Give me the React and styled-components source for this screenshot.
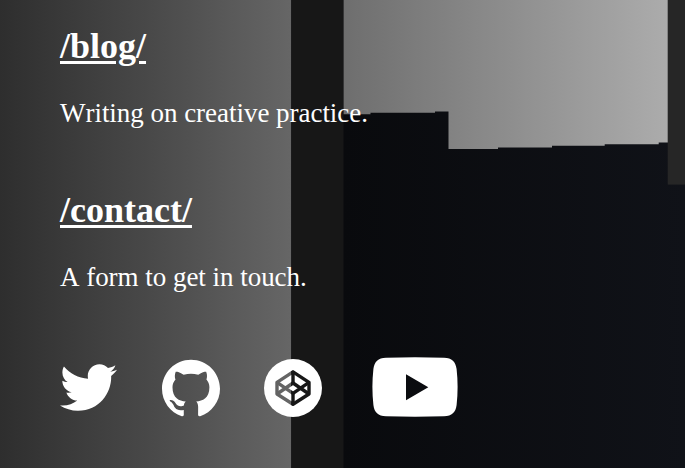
import React from 'react';
import styled, { createGlobalStyle } from 'styled-components';
import { FaTwitter } from 'react-icons/fa';
import { SiGithub } from 'react-icons/si';

const GlobalStyle = createGlobalStyle`
  body {
    margin: 0;
    background: #0b0c10;
    overflow: hidden;
  }
`;

const Page = styled.main`
  position: relative;
  box-sizing: border-box;
  width: 685px;
  height: 468px;
  overflow: hidden;
  color: #fff;
  font-family: 'Liberation Serif', 'Times New Roman', serif;
  font-kerning: none;
`;

const Scenery = styled.svg`
  position: absolute;
  inset: 0;
  display: block;
`;

const Content = styled.div`
  position: relative;
  display: flex;
  flex-direction: column;
  padding: 26px 0 0 60px;
`;

const Section = styled.section`
  height: 164px;
`;

const Title = styled.h2`
  margin: 0 0 31px;
  font-size: 36px;
  line-height: 41px;
  font-weight: 700;
`;

const TitleLink = styled.a`
  color: inherit;
  text-decoration: underline;
  text-decoration-thickness: 3px;
  text-underline-offset: 3px;
`;

const Summary = styled.p`
  margin: 0;
  font-size: 27px;
  line-height: 31px;
  letter-spacing: -0.03px;
`;

const Social = styled.nav`
  display: flex;
  align-items: center;
  height: 60px;
  margin-top: 3px;
`;

const SocialLink = styled.a`
  display: flex;
  flex: none;
  margin-left: ${(p) => p.$gap || 0}px;
  margin-top: ${(p) => p.$drop || 0}px;
  color: #fff;
`;

function Backdrop() {
  return (
    <Scenery width="685" height="468" viewBox="0 0 685 468" aria-hidden="true">
      <defs>
        <linearGradient id="wall" x1="0" x2="1">
          <stop offset="0" stopColor="#2e2e2e" />
          <stop offset="0.5" stopColor="#484848" />
          <stop offset="1" stopColor="#666666" />
        </linearGradient>
        <linearGradient id="sky" x1="0" x2="1">
          <stop offset="0" stopColor="#6e6e6e" />
          <stop offset="1" stopColor="#acacac" />
        </linearGradient>
        <linearGradient id="block" x1="0" x2="1">
          <stop offset="0" stopColor="#090a0d" />
          <stop offset="1" stopColor="#101218" />
        </linearGradient>
      </defs>
      <rect width="291.3" height="468" fill="url(#wall)" />
      <rect x="291.3" width="52.5" height="468" fill="#171717" />
      <rect x="343.6" width="341.4" height="468" fill="url(#block)" />
      <path
        d="M343.6 0H668V142.6H658.7V144.3H604.7V145.8H552V147.4H498V148.9H448.5V111.4H435V112.7H370.5V114.3H343.6Z"
        fill="url(#sky)"
      />
      <rect x="667.7" width="17.3" height="184.6" fill="#262626" />
    </Scenery>
  );
}

function CodepenIcon() {
  return (
    <svg width="58" height="58" viewBox="0 0 58 58">
      <mask id="codepen-cut">
        <rect width="58" height="58" fill="#fff" />
        <g fill="none" stroke="#000" strokeWidth="3.4" strokeLinejoin="round">
          <path d="M29 12.8 45 23.4v11.6L29 45.2 13 35V23.4Z" />
          <path d="M29 12.8V24M29 34.4V45.2" />
          <path d="M13 23.4 29 34.4 45 23.4M13 35 29 24 45 35" />
        </g>
      </mask>
      <circle cx="29" cy="29" r="29" fill="currentColor" mask="url(#codepen-cut)" />
    </svg>
  );
}

function YoutubeIcon() {
  return (
    <svg width="86" height="60" viewBox="0 0 86 60">
      <path
        fill="currentColor"
        fillRule="evenodd"
        d="M14 .7Q43-.2 72 .7C80 1 83.6 4.5 84.6 12Q86.6 30 84.6 48C83.6 55.5 80 59 72 59.3Q43 60.2 14 59.3C6 59 2.4 55.5 1.4 48Q-.6 30 1.4 12C2.4 4.5 6 1 14 .7ZM34 17.3V43.2L56.3 30.3Z"
      />
    </svg>
  );
}

const sections = [
  { title: '/blog/', summary: 'Writing on creative practice.' },
  { title: '/contact/', summary: 'A form to get in touch.' },
];

export default function App() {
  return (
    <>
      <GlobalStyle />
      <Page>
        <Backdrop />
        <Content>
          {sections.map(({ title, summary }) => (
            <Section key={title}>
              <Title>
                <TitleLink href="#">{title}</TitleLink>
              </Title>
              <Summary>{summary}</Summary>
            </Section>
          ))}
          <Social>
            <SocialLink href="#" aria-label="Twitter" $drop={1}>
              <FaTwitter size={57} />
            </SocialLink>
            <SocialLink href="#" aria-label="GitHub" $gap={45} $drop={2}>
              <SiGithub size={58} />
            </SocialLink>
            <SocialLink href="#" aria-label="CodePen" $gap={44} $drop={2}>
              <CodepenIcon />
            </SocialLink>
            <SocialLink href="#" aria-label="YouTube" $gap={50}>
              <YoutubeIcon />
            </SocialLink>
          </Social>
        </Content>
      </Page>
    </>
  );
}
